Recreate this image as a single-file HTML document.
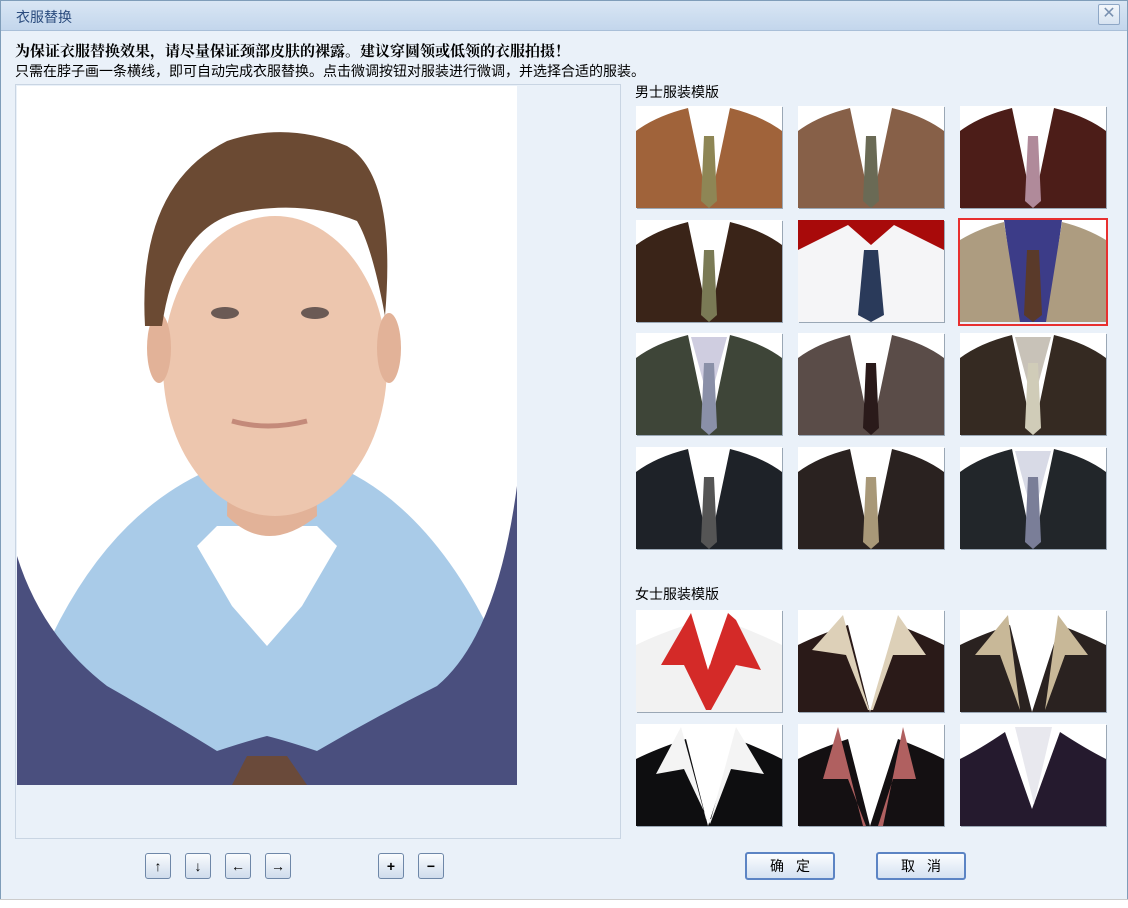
<!DOCTYPE html>
<html><head><meta charset="utf-8"><style>
body{margin:0;width:1128px;height:907px;overflow:hidden;background:#fff;font-family:"Liberation Sans","Noto Sans CJK SC",sans-serif;position:relative}
.win{position:absolute;left:0;top:0;width:1126px;height:898px;border:1px solid #7f9db9;background:#eaf1f9}
.title{position:absolute;left:0;top:0;width:1126px;height:29px;background:linear-gradient(#d9e6f4,#c3d6ec);border-bottom:1px solid #a9bfd8}
.title span{position:absolute;left:15px;top:6px;font-size:14px;color:#2b4c7e}
.close{position:absolute;left:1097px;top:3px;width:20px;height:19px;border:1px solid #8ea7c6;background:linear-gradient(#f3f7fb,#d7e3f1);border-radius:2px;color:#7890b0;font-size:16px;text-align:center;line-height:18px}
.t1{position:absolute;left:14px;top:39px;font-size:15px;font-weight:bold;color:#000;font-family:"Liberation Serif","Noto Serif CJK SC",serif}
.t2{position:absolute;left:14px;top:60px;font-size:14px;color:#000}
.panel{position:absolute;left:14px;top:83px;width:604px;height:753px;border:1px solid #c9d5e3;background:#eaf1f9}
.lab{position:absolute;font-size:14px;color:#000}
.th{position:absolute;width:146px;height:102px;box-shadow:1px 1px 0 #9aa7b5}
.th svg{display:block}
.btn{position:absolute;top:852px;width:26px;height:26px;border:1px solid #6e87a8;border-radius:3px;background:linear-gradient(#fafcfe,#cfdcec);box-sizing:border-box;text-align:center;font-size:14px;font-weight:bold;line-height:24px;color:#000}
.bb{position:absolute;top:851px;width:90px;height:28px;border:2px solid #5c84c4;border-radius:3px;background:linear-gradient(#fbfdff,#d4e1f1);box-sizing:border-box;text-align:center;font-size:14px;line-height:24px;letter-spacing:12px;padding-left:12px}
.status{position:absolute;left:0;top:899px;width:1128px;height:8px;background:#fff;border-top:1px solid #ccc}
</style></head><body>
<div class="win">
<div class="title"><span>衣服替换</span><div class="close">✕</div></div>
<div class="t1">为保证衣服替换效果，请尽量保证颈部皮肤的裸露。建议穿圆领或低领的衣服拍摄！</div>
<div class="t2">只需在脖子画一条横线，即可自动完成衣服替换。点击微调按钮对服装进行微调，并选择合适的服装。</div>
<div class="panel">
<svg width="500" height="699" style="position:absolute;left:1px;top:1px" viewBox="0 0 500 699">
<rect width="500" height="699" fill="#fff"/>
<path d="M30 699 L30 560 Q90 430 190 385 L330 385 Q420 430 480 560 L480 699Z" fill="#a9cbe8"/>
<path d="M180 460 L215 520 L250 560 L285 520 L320 460 L300 440 L200 440Z" fill="#fff"/>
<path d="M212 330 L210 430 Q250 470 300 430 L298 330Z" fill="#e2b298"/>
<ellipse cx="258" cy="280" rx="112" ry="150" fill="#edc6ae"/>
<ellipse cx="142" cy="262" rx="12" ry="35" fill="#e2b298"/>
<ellipse cx="372" cy="262" rx="12" ry="35" fill="#e2b298"/>
<path d="M128 240 Q120 100 210 55 Q270 35 330 60 Q380 90 368 230 Q355 160 340 135 Q290 115 230 125 Q160 135 145 240Z" fill="#6b4a33"/>
<ellipse cx="208" cy="227" rx="14" ry="6" fill="#6b5a55"/>
<ellipse cx="298" cy="227" rx="14" ry="6" fill="#6b5a55"/>
<path d="M215 335 Q250 345 290 335" stroke="#c48a7a" stroke-width="5" fill="none"/>
<path d="M0 470 Q25 550 90 600 Q160 640 200 665 Q230 655 250 650 Q270 655 300 665 Q360 630 420 600 Q480 550 500 400 L500 699 L0 699Z" fill="#4a4f7e"/>
<path d="M215 699 L230 670 L270 670 L290 699Z" fill="#6a4a3a"/>
</svg>
</div>
<div class="lab" style="left:634px;top:81px">男士服装模版</div>
<div class="lab" style="left:634px;top:583px">女士服装模版</div>

<div class="th" style="left:635px;top:105px"><svg width="146" height="102"><rect width="146" height="102" fill="#fff"/><path d="M0 25 Q20 10 52 2 L73 102 L94 2 Q126 10 146 25 V102 H0Z" fill="#a0633a"/><path d="M68 30 L78 30 L81 95 L73 102 L65 95Z" fill="#8e8655"/></svg></div>
<div class="th" style="left:797px;top:105px"><svg width="146" height="102"><rect width="146" height="102" fill="#fff"/><path d="M0 25 Q20 10 52 2 L73 102 L94 2 Q126 10 146 25 V102 H0Z" fill="#876048"/><path d="M68 30 L78 30 L81 95 L73 102 L65 95Z" fill="#6a6a55"/></svg></div>
<div class="th" style="left:959px;top:105px"><svg width="146" height="102"><rect width="146" height="102" fill="#fff"/><path d="M0 25 Q20 10 52 2 L73 102 L94 2 Q126 10 146 25 V102 H0Z" fill="#4c1d18"/><path d="M68 30 L78 30 L81 95 L73 102 L65 95Z" fill="#b08a9a"/></svg></div>

<div class="th" style="left:635px;top:219px"><svg width="146" height="102"><rect width="146" height="102" fill="#fff"/><path d="M0 25 Q20 10 52 2 L73 102 L94 2 Q126 10 146 25 V102 H0Z" fill="#3a2418"/><path d="M68 30 L78 30 L81 95 L73 102 L65 95Z" fill="#7a7a55"/></svg></div>
<div class="th" style="left:797px;top:219px"><svg width="146" height="102"><rect width="146" height="102" fill="#a80a0a"/><path d="M0 30 L50 5 L73 25 L96 5 L146 30 V102 H0Z" fill="#f5f5f7"/><path d="M66 30 L80 30 L86 95 L73 102 L60 95Z" fill="#2a3a5a"/></svg></div>
<div class="th" style="left:957px;top:217px;width:146px;height:104px;border:2px solid #e83030;box-shadow:none"><svg width="146" height="102"><rect width="146" height="102" fill="#fff"/><path d="M44 0 L102 0 L88 102 L58 102Z" fill="#3c3c88"/><path d="M0 20 Q20 8 44 2 L60 102 L0 102Z M146 20 Q126 8 102 2 L86 102 L146 102Z" fill="#ad9c80"/><path d="M67 30 L79 30 L82 95 L73 102 L64 95Z" fill="#5a3a2a"/></svg></div>

<div class="th" style="left:635px;top:332px"><svg width="146" height="102"><rect width="146" height="102" fill="#fff"/><path d="M0 25 Q20 10 52 2 L73 102 L94 2 Q126 10 146 25 V102 H0Z" fill="#3e4538"/><path d="M55 4 L91 4 L73 70Z" fill="#cfcde0"/><path d="M68 30 L78 30 L81 95 L73 102 L65 95Z" fill="#8a90a8"/></svg></div>
<div class="th" style="left:797px;top:332px"><svg width="146" height="102"><rect width="146" height="102" fill="#fff"/><path d="M0 25 Q20 10 52 2 L73 102 L94 2 Q126 10 146 25 V102 H0Z" fill="#5a4c48"/><path d="M68 30 L78 30 L81 95 L73 102 L65 95Z" fill="#2a1a1a"/></svg></div>
<div class="th" style="left:959px;top:332px"><svg width="146" height="102"><rect width="146" height="102" fill="#fff"/><path d="M0 25 Q20 10 52 2 L73 102 L94 2 Q126 10 146 25 V102 H0Z" fill="#352a22"/><path d="M55 4 L91 4 L73 70Z" fill="#c8c2b8"/><path d="M68 30 L78 30 L81 95 L73 102 L65 95Z" fill="#d0ccb8"/></svg></div>

<div class="th" style="left:635px;top:446px"><svg width="146" height="102"><rect width="146" height="102" fill="#fff"/><path d="M0 25 Q20 10 52 2 L73 102 L94 2 Q126 10 146 25 V102 H0Z" fill="#1e2228"/><path d="M68 30 L78 30 L81 95 L73 102 L65 95Z" fill="#555"/></svg></div>
<div class="th" style="left:797px;top:446px"><svg width="146" height="102"><rect width="146" height="102" fill="#fff"/><path d="M0 25 Q20 10 52 2 L73 102 L94 2 Q126 10 146 25 V102 H0Z" fill="#2a2220"/><path d="M68 30 L78 30 L81 95 L73 102 L65 95Z" fill="#a89878"/></svg></div>
<div class="th" style="left:959px;top:446px"><svg width="146" height="102"><rect width="146" height="102" fill="#fff"/><path d="M0 25 Q20 10 52 2 L73 102 L94 2 Q126 10 146 25 V102 H0Z" fill="#22262a"/><path d="M55 4 L91 4 L73 70Z" fill="#d8dae6"/><path d="M68 30 L78 30 L81 95 L73 102 L65 95Z" fill="#7a7e98"/></svg></div>

<div class="th" style="left:635px;top:609px"><svg width="146" height="102"><rect width="146" height="102" fill="#fff"/><path d="M0 35 Q20 25 50 15 L72 100 L100 15 Q126 25 146 35 V102 H0Z" fill="#f2f2f2"/><path d="M55 3 L72 60 L92 3 L100 10 L125 60 L100 55 L75 100 L70 100 L48 55 L25 55Z" fill="#d42a28"/><path d="M58 3 L90 3 L74 55Z" fill="#fff"/></svg></div>
<div class="th" style="left:797px;top:609px"><svg width="146" height="102"><rect width="146" height="102" fill="#fff"/><path d="M0 35 Q20 25 50 15 L72 102 L100 15 Q126 25 146 35 V102 H0Z" fill="#2a1a18"/><path d="M45 5 L65 80 L72 102 L78 80 L100 5 L128 45 L95 45 L75 100 L70 100 L48 45 L14 40Z" fill="#ddd0b8"/><path d="M52 3 L94 3 L74 80Z" fill="#fff"/></svg></div>
<div class="th" style="left:959px;top:609px"><svg width="146" height="102"><rect width="146" height="102" fill="#fff"/><path d="M0 35 Q20 25 50 15 L72 102 L100 15 Q126 25 146 35 V102 H0Z" fill="#2a2220"/><path d="M48 5 L60 100 L85 100 L98 5 L128 45 L105 45 L85 100 L60 100 L40 45 L15 45Z" fill="#c8b898"/><path d="M55 3 L92 3 L74 65Z" fill="#fff"/></svg></div>

<div class="th" style="left:635px;top:723px"><svg width="146" height="102"><rect width="146" height="102" fill="#fff"/><path d="M0 35 Q20 25 50 15 L72 102 L100 15 Q126 25 146 35 V102 H0Z" fill="#0e0e10"/><path d="M45 3 L70 95 L75 95 L100 3 L128 50 L95 45 L74 100 L48 45 L20 50Z" fill="#f4f4f4"/></svg></div>
<div class="th" style="left:797px;top:723px"><svg width="146" height="102"><rect width="146" height="102" fill="#fff"/><path d="M0 35 Q20 25 50 15 L72 102 L100 15 Q126 25 146 35 V102 H0Z" fill="#141012"/><path d="M40 3 L65 102 L85 102 L105 3 L118 55 L95 55 L80 102 L68 102 L50 55 L25 55Z" fill="#b06060"/><path d="M52 3 L94 3 L74 60Z" fill="#fff"/></svg></div>
<div class="th" style="left:959px;top:723px"><svg width="146" height="102"><rect width="146" height="102" fill="#fff"/><path d="M0 35 Q20 25 45 8 L72 85 L100 8 Q126 25 146 35 V102 H0Z" fill="#251a2e"/><path d="M55 3 L92 3 L74 80Z" fill="#e8e8ee"/></svg></div>

<div class="btn" style="left:144px">↑</div>
<div class="btn" style="left:184px">↓</div>
<div class="btn" style="left:224px">←</div>
<div class="btn" style="left:264px">→</div>
<div class="btn" style="left:377px">+</div>
<div class="btn" style="left:417px">−</div>
<div class="bb" style="left:744px">确定</div>
<div class="bb" style="left:875px">取消</div>
</div>
<div class="status"></div>
</body></html>
